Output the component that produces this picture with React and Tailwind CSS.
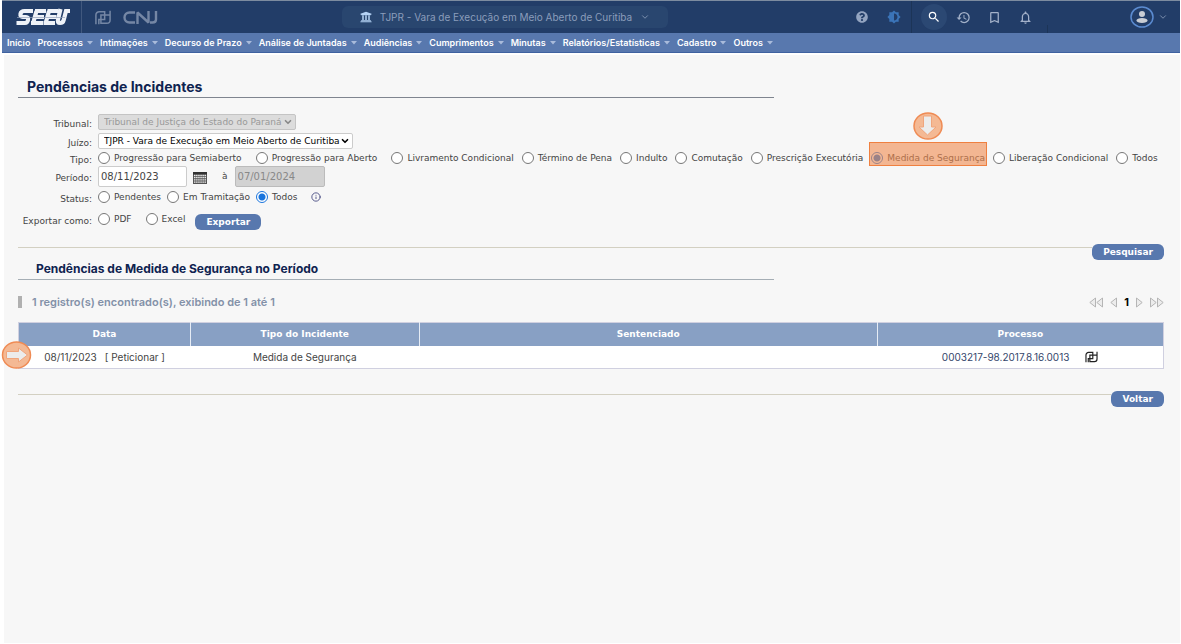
import { FaUniversity, FaQuestionCircle } from "react-icons/fa";
import { MdHistory, MdBookmarkBorder, MdNotificationsNone, MdSearch, MdBrightness6 } from "react-icons/md";
import { ChevronDown, Info } from "lucide-react";

const INTER = "font-['Inter',sans-serif]";

const menu = [
  ["Início", false],
  ["Processos", true],
  ["Intimações", true],
  ["Decurso de Prazo", true],
  ["Análise de Juntadas", true],
  ["Audiências", true],
  ["Cumprimentos", true],
  ["Minutas", true],
  ["Relatórios/Estatísticas", true],
  ["Cadastro", true],
  ["Outros", true],
];

function Caret() {
  return (
    <svg viewBox="0 0 6 4" className="h-1 w-1.5 fill-[#a9bbdb]" aria-hidden="true">
      <path d="M0 0h6L3 3.6z" />
    </svg>
  );
}

function PdMark({ className, strokeWidth = 1.8 }) {
  return (
    <svg viewBox="0 0 20 18" className={className} fill="none" stroke="currentColor" strokeWidth={strokeWidth} aria-hidden="true">
      <path d="M1.500 17V6a4 4 0 0 1 4-4H12V11.500H5V17" />
      <path d="M7.500 11.500V6H18M18.500 1v11a4 4 0 0 1-4 4H7.500V11.500" />
    </svg>
  );
}

function SeeuLogo() {
  return (
    <svg viewBox="0 0 54 18" className="h-[18px] w-[54px]" role="img" aria-label="SEEU">
      <g fill="none" stroke="#eef2f8" strokeWidth="4.200">
        <path d="M17 3H8.500Q5 3 4.500 5.800T7 9h3q2.500 0 2 3t-3 3H.5" />
        <path d="M30 3H19M20.500 3 17.200 15M15 15H27M18.500 9H28" />
        <path d="M42.500 3H31.500M33 3 29.700 15M27.500 15H39M31 9H40.500" />
        <path d="M44.500 1 42 11.500q-.8 3.500 2 3.500 3 0 3.700-3L50 3h4" />
      </g>
      <path d="M1 9.500H49" stroke="#93a2ba" strokeWidth=".7" />
    </svg>
  );
}

function CnjLogo() {
  return (
    <svg viewBox="0 0 36 15" className="h-[15px] w-9" fill="none" stroke="#7587a5" strokeWidth="2.400" role="img" aria-label="CNJ">
      <path d="M13 2.500H7.500a5 5 0 0 0 0 10H13" />
      <path d="M15.500 14V2.500L26.500 12.500V1" strokeLinejoin="bevel" />
      <path d="M34 1V9.500q0 3-3.500 3H28" />
    </svg>
  );
}

function Radio({ name, label, checked, className = "" }) {
  return (
    <label className={`flex items-center gap-1 whitespace-nowrap ${className}`}>
      <input
        type="radio"
        name={name}
        defaultChecked={checked}
        className="size-3 shrink-0 appearance-none rounded-full border border-[#777] bg-white checked:border-[#1a75dd] checked:bg-[radial-gradient(circle,#1a75dd_0_3px,#fff_4px)]"
      />
      {label}
    </label>
  );
}

function Arrow({ down, className }) {
  return (
    <svg viewBox="0 0 30 28" className={className} aria-hidden="true">
      <ellipse cx="15" cy="14" rx="14" ry="13" fill="#f4b994" stroke="#ef8b54" strokeWidth="1.500" />
      <path
        d={down ? "M10.500 4h8V15H23l-8.500 8L6 15h4.500z" : "M5 10.500H17V7l9 7-9 7V17.500H5z"}
        fill="#ececec"
        stroke="#f0a57c"
      />
    </svg>
  );
}

function PageArrow({ label, double, flip }) {
  return (
    <button type="button" aria-label={label}>
      <svg
        viewBox={double ? "0 0 14 11" : "0 0 7 11"}
        className={`${double ? "w-3.5" : "w-[7px]"} h-[11px] ${flip ? "rotate-180" : ""}`}
        fill="#ececec"
        stroke="#b5b5b5"
      >
        <path d="M6.500 1v9L.8 5.500z" />
        {double && <path d="M13.500 1v9L7.800 5.500z" />}
      </svg>
    </button>
  );
}

function CalendarIcon() {
  return (
    <svg viewBox="0 0 14 12" className="h-3 w-3.5" aria-hidden="true">
      <path d="M0 0h14v12H0z" fill="#555" />
      <path d="M0 0h14v2.500H0z" fill="#333" />
      <path d="M1 3.500h12M1 5.700h12M1 7.900h12M1 10.100h12" stroke="#eee" strokeWidth="1.300" strokeDasharray="1.500 .6" />
    </svg>
  );
}

function Row({ label, htmlFor, className = "", children }) {
  return (
    <div className={`flex items-center gap-1.5 ${className}`}>
      <label htmlFor={htmlFor} className="w-[74px] shrink-0 pt-1 text-right whitespace-nowrap">
        {label}
      </label>
      {children}
    </div>
  );
}

function Select({ id, disabled, option, className }) {
  return (
    <span className="relative flex items-center">
      <select id={id} disabled={disabled} className={`h-4 appearance-none rounded-xs border px-[5px] text-[9px] ${className}`}>
        <option>{option}</option>
      </select>
      <ChevronDown
        strokeWidth={4}
        className={`pointer-events-none absolute right-[3px] size-2.5 ${disabled ? "text-[#888]" : "text-black"}`}
      />
    </span>
  );
}

function Action({ className = "", children }) {
  return (
    <button type="button" className={`h-4 rounded-md bg-[#5878ae] px-[11px] text-[9px] leading-4 font-bold text-white ${className}`}>
      {children}
    </button>
  );
}

function ActionBar({ className, children }) {
  return (
    <div className={`flex ${className}`}>
      <div className="mt-[3px] flex-1 border-t border-[#d3d0c2]" />
      <Action>{children}</Action>
    </div>
  );
}

export default function App() {
  return (
    <div className="min-h-screen bg-white pr-px pl-0.5 font-['DejaVu_Sans',Verdana,sans-serif] text-[10px] leading-3 text-[#444]">
      <header className={`${INTER} border-t border-[#7d8ca0]`}>
        <div className="flex h-8 items-stretch bg-[#223d68]">
          <div className="flex w-20 shrink-0 items-center border-r border-[#41587e] pl-3.5">
            <SeeuLogo />
          </div>
          <div className="flex shrink-0 items-center gap-2.5 pl-3 text-[#7587a5]">
            <PdMark className="h-[15px] w-[18px]" />
            <CnjLogo />
          </div>
          <div className="flex flex-1 items-center justify-center pr-1">
            <button
              type="button"
              className="flex h-[22px] items-center gap-2 rounded-md bg-[#29466f] px-[18px] text-[10px] whitespace-nowrap text-[#8b9dbb]"
            >
              <FaUniversity className="size-3 text-[#b5d3f5]" />
              TJPR - Vara de Execução em Meio Aberto de Curitiba
              <ChevronDown className="size-2.5" />
            </button>
          </div>
          <div className="flex shrink-0 items-center gap-[19px] border-r border-[#1c3457] pr-2.5 text-[#93a4c0]">
            <button type="button" aria-label="Ajuda"><FaQuestionCircle className="size-3" /></button>
            <button type="button" aria-label="Contraste" className="text-[#3b74b8]"><MdBrightness6 className="size-3.5" /></button>
          </div>
          <div className="flex shrink-0 items-center gap-4 pr-3.5 pl-[9px] text-[#a3b1c9]">
            <button
              type="button"
              aria-label="Buscar"
              className="-mr-[7px] flex size-[26px] items-center justify-center rounded-full bg-[#2b4873] text-white"
            >
              <MdSearch className="size-3.5" stroke="currentColor" />
            </button>
            <button type="button" aria-label="Histórico"><MdHistory className="size-[15px]" /></button>
            <button type="button" aria-label="Favoritos"><MdBookmarkBorder className="size-[15px]" /></button>
            <button type="button" aria-label="Notificações"><MdNotificationsNone className="size-[15px]" /></button>
          </div>
          <div className="h-2 w-px self-end bg-[#1c3457]" />
          <button
            type="button"
            aria-label="Usuário"
            className="flex w-[132px] shrink-0 items-center justify-end gap-1 pr-3 text-[#8b9dbb]"
          >
            <svg viewBox="0 0 24 22" className="h-[22px] w-6" aria-hidden="true">
              <ellipse cx="12" cy="11" rx="11" ry="10" fill="none" stroke="#5b8bd0" strokeWidth="1.500" />
              <circle cx="12" cy="8" r="3" fill="#c9cdd4" />
              <ellipse cx="12" cy="14.500" rx="5.500" ry="2.500" fill="#c9cdd4" />
            </svg>
            <ChevronDown className="size-2.5" />
          </button>
        </div>
        <nav className="flex h-5 items-center gap-[7px] border-b border-[#3f62a0] bg-[#5878ae] pl-[5px] text-[9px] font-semibold text-white">
          {menu.map(([name, sub]) => (
            <a key={name} href="#" className="flex items-center gap-1 whitespace-nowrap">
              {name}
              {sub && <Caret />}
            </a>
          ))}
        </nav>
      </header>

      <main className="mt-0.5 ml-0.5 min-h-[calc(100vh-56px)] bg-[#f7f7f7] pr-4 pl-3.5">
        <h1 className={`${INTER} w-[66%] border-b border-[#7f858f] pt-6 pb-0.5 pl-[9px] text-[14px] leading-4 font-bold text-[#0f2350]`}>
          Pendências de Incidentes
        </h1>

        <form className="mt-4 text-[9px]">
          <Row label="Tribunal:" htmlFor="tribunal">
            <Select
              id="tribunal"
              disabled
              option="Tribunal de Justiça do Estado do Paraná"
              className="w-[198px] border-[#c4c4c4] bg-[#dcdcdc] text-[#999]"
            />
          </Row>
          <Row label="Juízo:" htmlFor="juizo" className="mt-[3px]">
            <Select
              id="juizo"
              option="TJPR - Vara de Execução em Meio Aberto de Curitiba"
              className="w-[255px] border-[#ccc] bg-white text-black"
            />
          </Row>
          <Row label="Tipo:" className="h-[17px]">
            <div className="flex items-center gap-2">
              <Radio name="tipo" label="Progressão para Semiaberto" />
              <Radio name="tipo" label="Progressão para Aberto" className="ml-1.5" />
              <Radio name="tipo" label="Livramento Condicional" className="ml-1.5" />
              <Radio name="tipo" label="Término de Pena" />
              <Radio name="tipo" label="Indulto" />
              <Radio name="tipo" label="Comutação" />
              <Radio name="tipo" label="Prescrição Executória" />
              <span className="relative">
                <Radio name="tipo" label="Medida de Segurança" checked />
                <span className="pointer-events-none absolute -inset-x-0.5 -top-2.5 -bottom-0.5 border border-[#ef8040] bg-[#f08a4e]/60" />
                <Arrow down className="absolute -top-10 left-1/2 h-7 w-[30px] -translate-x-1/2" />
              </span>
              <Radio name="tipo" label="Liberação Condicional" />
              <Radio name="tipo" label="Todos" />
            </div>
          </Row>
          <Row label="Período:" htmlFor="inicio" className="h-5">
            <input
              id="inicio"
              defaultValue="08/11/2023"
              className="h-[21px] w-[89px] rounded-xs border border-[#ccc] bg-white px-0.5 text-[10px]"
            />
            <button type="button" aria-label="Calendário" className="pt-1 pr-2"><CalendarIcon /></button>
            <label htmlFor="fim" className="px-px">à</label>
            <input
              id="fim"
              disabled
              defaultValue="07/01/2024"
              className="h-[21px] w-[90px] rounded-xs border border-[#bbb] bg-[#d2d2d2] px-0.5 text-[10px] text-[#888]"
            />
          </Row>
          <Row label="Status:" className="mt-0.5 h-[18px]">
            <Radio name="status" label="Pendentes" />
            <Radio name="status" label="Em Tramitação" />
            <Radio name="status" label="Todos" checked />
            <button type="button" aria-label="Informações" className="pl-2 text-[#3b3f7a]"><Info className="size-2.5" /></button>
          </Row>
          <Row label="Exportar como:" className="mt-0.5">
            <Radio name="formato" label="PDF" />
            <Radio name="formato" label="Excel" className="ml-2" />
            <Action className="mt-1.5 ml-1">Exportar</Action>
          </Row>
        </form>

        <ActionBar className="mt-3.5">Pesquisar</ActionBar>

        <h2 className={`${INTER} w-[66%] border-b border-[#a5aeb5] pt-px pb-0.5 pl-[18px] text-[12px] leading-4 font-bold text-[#0f2350]`}>
          Pendências de Medida de Segurança no Período
        </h2>
        <div className={`${INTER} mt-4 flex items-center justify-between`}>
          <p className="border-l-4 border-[#b0b0b0] pl-2.5 text-[11px] leading-3 font-semibold text-[#8391a8]">
            1 registro(s) encontrado(s), exibindo de 1 até 1
          </p>
          <div className="flex items-center gap-[7px]">
            <PageArrow label="Primeira" double />
            <PageArrow label="Anterior" />
            <b className="text-[11px] text-black">1</b>
            <PageArrow label="Próxima" flip />
            <PageArrow label="Última" double flip />
          </div>
        </div>
        <div className="relative mt-3.5">
          <table className="w-full table-fixed border border-[#d0d0e0] bg-white text-center">
            <thead className="bg-[#88a0c4] text-[9px] text-white">
              <tr className="h-[23px] divide-x divide-[#e6ecf5]">
                <th className="w-[15%]">Data</th>
                <th className="w-[20%]">Tipo do Incidente</th>
                <th className="w-[40%]">Sentenciado</th>
                <th>Processo</th>
              </tr>
            </thead>
            <tbody className={`${INTER} text-[10px]`}>
              <tr className="h-[23px]">
                <td>
                  <div className="flex justify-center gap-2 whitespace-nowrap">
                    <span>08/11/2023</span>
                    <a href="#">[ Peticionar ]</a>
                  </div>
                </td>
                <td>Medida de Segurança</td>
                <td></td>
                <td>
                  <div className="flex items-center justify-center gap-4">
                    <a href="#" className="text-[#34466b]">0003217-98.2017.8.16.0013</a>
                    <button type="button" aria-label="Abrir processo" className="text-[#222]">
                      <PdMark className="h-3 w-[13px]" />
                    </button>
                  </div>
                </td>
              </tr>
            </tbody>
          </table>
          <Arrow className="absolute bottom-0 -left-[17px] h-7 w-[31px]" />
        </div>
        <ActionBar className="mt-[22px]">Voltar</ActionBar>
      </main>
    </div>
  );
}
